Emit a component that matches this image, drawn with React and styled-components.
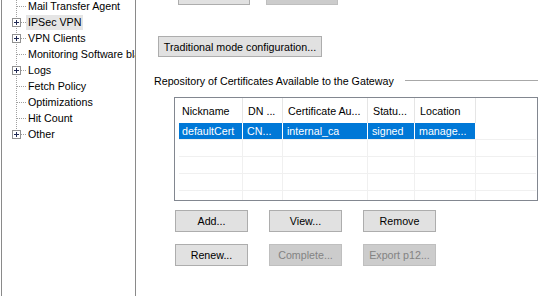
import React from "react";
import styled, { createGlobalStyle } from "styled-components";

const Global = createGlobalStyle`
  html, body { margin: 0; padding: 0; background: #ffffff; }
  body { font-family: "Liberation Sans", Arial, sans-serif; font-size: 10.7px; color: #000; }
  * { box-sizing: border-box; }
`;

const Page = styled.div`
  display: flex;
  width: 553px;
  height: 296px;
  overflow: hidden;
  background: #fff;
`;

const TreePanel = styled.div`
  margin-left: 1px;
  width: 135px;
  height: 296px;
  border-left: 1px solid #8a8a8a;
  border-right: 1px solid #8a8a8a;
  overflow: hidden;
  background: #fff;
`;

const TreeList = styled.div`
  margin-top: -2px;
  display: flex;
  flex-direction: column;
`;

const TreeRow = styled.div`
  display: flex;
  align-items: center;
  height: 16px;
  white-space: nowrap;
`;

const TreeLabel = styled.span`
  display: inline-block;
  height: 15px;
  line-height: 15px;
  padding: 0 2px;
  background: ${(p) => (p.$hot ? "#e5e5e5" : "transparent")};
`;

const Connector = ({ expandable, last }) => (
  <svg width="24" height="16" style={{ flex: "0 0 24px" }}>
    <line x1="14.5" y1="0" x2="14.5" y2={last ? 8 : 16} stroke="#a0a0a0" strokeDasharray="1 1" />
    <line x1="15" y1="8.5" x2="24" y2="8.5" stroke="#a0a0a0" strokeDasharray="1 1" />
    {expandable && (
      <g>
        <rect x="10.5" y="4.5" width="8" height="8" fill="#fff" stroke="#919191" />
        <line x1="12" y1="8.5" x2="17" y2="8.5" stroke="#222b55" />
        <line x1="14.5" y1="6" x2="14.5" y2="11" stroke="#222b55" />
      </g>
    )}
  </svg>
);

const Main = styled.div`
  flex: 1;
  display: flex;
  flex-direction: column;
  background: #fff;
`;

const ButtonRow = styled.div`
  display: flex;
  gap: ${(p) => p.$gap || 16}px;
  padding-left: ${(p) => p.$left || 0}px;
  margin-top: ${(p) => p.$top || 0}px;
`;

const Button = styled.div`
  width: ${(p) => p.$w || 73}px;
  height: ${(p) => p.$h || 22}px;
  display: flex;
  align-items: center;
  justify-content: center;
  background: ${(p) => (p.$disabled ? "#cccccc" : "#e1e1e1")};
  border: 1px solid ${(p) => (p.$disabled ? "#bfbfbf" : "#adadad")};
  color: ${(p) => (p.$disabled ? "#838383" : "#000")};
  white-space: nowrap;
`;

const GroupHeader = styled.div`
  display: flex;
  align-items: center;
  gap: 11px;
  margin-top: 16px;
  padding-left: 18px;
  margin-right: 15px;
  height: 15px;
  white-space: nowrap;
`;

const GroupLine = styled.div`
  flex: 1;
  height: 1px;
  background: #a8a8a8;
`;

const Table = styled.div`
  margin-top: 9px;
  margin-left: 38px;
  width: 364px;
  height: 104px;
  border: 1px solid #828790;
  overflow: hidden;
  background: #fff;
`;

const HeaderRow = styled.div`
  display: flex;
  height: 25px;
`;

const HeaderCell = styled.div`
  flex: 0 0 ${(p) => p.$w}px;
  display: flex;
  align-items: center;
  padding-left: ${(p) => p.$pad}px;
  border-right: 1px solid #e5e5e5;
  white-space: nowrap;
  overflow: hidden;
`;

const Body = styled.div`
  padding-left: 4px;
  padding-right: 1px;
`;

const BodyRow = styled.div`
  display: flex;
  height: 17px;
  border-bottom: 1px solid #f0f0f0;
`;

const Cell = styled.div`
  flex: 0 0 ${(p) => p.$w}px;
  display: flex;
  align-items: center;
  padding-left: ${(p) => p.$pad}px;
  border-right: 1px solid ${(p) => (p.$sel ? "#ffffff" : "#f0f0f0")};
  background: ${(p) => (p.$sel ? "#0078d7" : "transparent")};
  color: ${(p) => (p.$sel ? "#fff" : "#000")};
  white-space: nowrap;
  overflow: hidden;
`;

const Filler = styled.div`
  flex: 1;
`;

const treeItems = [
  { label: "Mail Transfer Agent" },
  { label: "IPSec VPN", exp: true, hot: true },
  { label: "VPN Clients", exp: true },
  { label: "Monitoring Software blade" },
  { label: "Logs", exp: true },
  { label: "Fetch Policy" },
  { label: "Optimizations" },
  { label: "Hit Count" },
  { label: "Other", exp: true, last: true },
];

const headers = ["Nickname", "DN ...", "Certificate Au...", "Statu...", "Location"];
const headW = [68, 40, 85, 47, 61];
const bodyW = [64, 40, 85, 47, 61];
const firstRow = ["defaultCert", "CN...", "internal_ca", "signed", "manage..."];

export default function App() {
  return (
    <>
      <Global />
      <Page>
        <TreePanel>
          <TreeList>
            {treeItems.map((t) => (
              <TreeRow key={t.label}>
                <Connector expandable={t.exp} last={t.last} />
                <TreeLabel $hot={t.hot}>{t.label}</TreeLabel>
              </TreeRow>
            ))}
          </TreeList>
        </TreePanel>
        <Main>
          <ButtonRow $left={42} $top={-16} $gap={16}>
            <Button $w={72} $h={21} />
            <Button $w={72} $h={21} $disabled />
          </ButtonRow>
          <ButtonRow $left={22} $top={31}>
            <Button $w={164} $h={21}>Traditional mode configuration...</Button>
          </ButtonRow>
          <GroupHeader>
            <span>Repository of Certificates Available to the Gateway</span>
            <GroupLine />
          </GroupHeader>
          <Table>
            <HeaderRow>
              {headers.map((h, i) => (
                <HeaderCell key={h} $w={headW[i]} $pad={i === 0 ? 7 : 5}>
                  {h}
                </HeaderCell>
              ))}
              <Filler />
            </HeaderRow>
            <Body>
              <BodyRow>
                {firstRow.map((c, i) => (
                  <Cell key={i} $w={bodyW[i]} $pad={i === 0 ? 3 : 4} $sel>
                    {c}
                  </Cell>
                ))}
                <Filler />
              </BodyRow>
              {[0, 1, 2, 3].map((r) => (
                <BodyRow key={r}>
                  {bodyW.map((w, i) => (
                    <Cell key={i} $w={w} $pad={4} />
                  ))}
                  <Filler />
                </BodyRow>
              ))}
            </Body>
          </Table>
          <ButtonRow $left={39} $top={9} $gap={21}>
            <Button>Add...</Button>
            <Button>View...</Button>
            <Button>Remove</Button>
          </ButtonRow>
          <ButtonRow $left={39} $top={12} $gap={21}>
            <Button>Renew...</Button>
            <Button $disabled>Complete...</Button>
            <Button $disabled>Export p12...</Button>
          </ButtonRow>
        </Main>
      </Page>
    </>
  );
}
